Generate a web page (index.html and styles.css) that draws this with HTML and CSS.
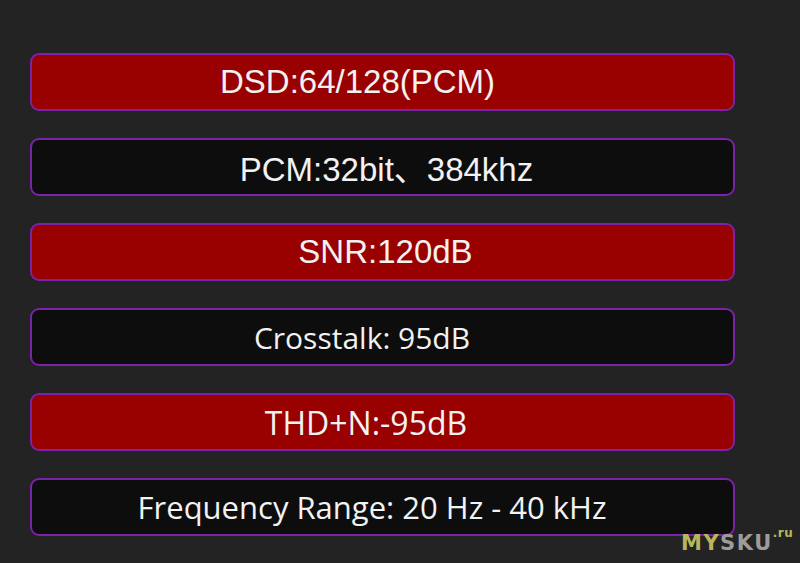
FILE: index.html
```html
<!DOCTYPE html>
<html>
<head>
<meta charset="utf-8">
<link rel="stylesheet" href="styles.css">
</head>
<body>
<div class="page">
  <div class="spec red arial shift-dsd">DSD:64/128(PCM)</div>
  <div class="spec dark arial shift-pcm">PCM:32bit、384khz</div>
  <div class="spec red arial shift-snr">SNR:120dB</div>
  <div class="spec dark sans shift-ct">Crosstalk: 95dB</div>
  <div class="spec red sans shift-thd">THD+N:-95dB</div>
  <div class="spec dark sans shift-fr">Frequency Range: 20 Hz - 40 kHz</div>
</div>
<div class="mark"><span class="my">MY</span><span class="sku">SKU</span><span class="ru">.ru</span></div>
</body>
</html>
```
FILE: styles.css
```css
html, body {
  margin: 0;
  padding: 0;
  background: #232323;
  width: 800px;
  height: 563px;
  overflow: hidden;
}
.page {
  display: flex;
  flex-direction: column;
  gap: 27px;
  padding: 53px 0 0 30px;
  width: 705px;
}
.spec {
  box-sizing: border-box;
  height: 58px;
  border: 2px solid #7a22a8;
  border-radius: 9px;
  display: flex;
  align-items: center;
  justify-content: center;
  color: #f2f2f2;
  white-space: nowrap;
}
.red { background: #990000; }
.dark { background: #0d0d0d; }
.arial {
  font-family: "Liberation Sans", "Noto Sans CJK SC", sans-serif;
  font-size: 33px;
}
.sans {
  font-family: "Open Sans", "Noto Sans", sans-serif;
  font-size: 31px;
}
.shift-dsd { padding-right: 50px; }
.shift-pcm { padding-left: 8px; }
.shift-snr { padding-left: 6px; }
.shift-ct { padding-right: 41px; font-size: 30px; }
.shift-thd { padding-right: 33px; font-size: 32px; }
.shift-fr { padding-right: 21px; }
.mark {
  position: absolute;
  left: 681px;
  top: 531px;
  font-family: "DejaVu Sans", sans-serif;
  font-weight: bold;
  font-size: 21px;
  letter-spacing: 1.5px;
}
.my { color: #b9b55c; }
.sku { color: #9c9c9c; }
.ru {
  color: #b9b55c;
  font-size: 12px;
  position: relative;
  top: -13px;
  margin-left: 0;
  letter-spacing: 0.5px;
  font-weight: bold;
}
```
